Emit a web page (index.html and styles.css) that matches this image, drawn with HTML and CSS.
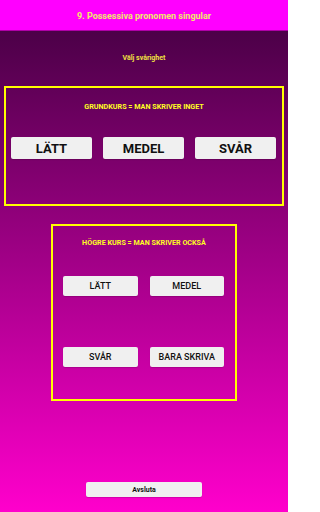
FILE: index.html
```html
<!DOCTYPE html>
<html lang="sv">
<head>
<meta charset="utf-8">
<link rel="stylesheet" href="styles.css">
</head>
<body>
<header class="topbar"><span class="title">9. Possessiva pronomen singular</span></header>
<main class="content">
  <p class="choose">Välj svårighet</p>
  <section class="box box-basic">
    <h2 class="box-title">GRUNDKURS = MAN SKRIVER INGET</h2>
    <div class="row3">
      <button class="btn btn-big">LÄTT</button>
      <button class="btn btn-big">MEDEL</button>
      <button class="btn btn-big">SVÅR</button>
    </div>
  </section>
  <section class="box box-high">
    <h2 class="box-title">HÖGRE KURS = MAN SKRIVER OCKSÅ</h2>
    <div class="grid2">
      <button class="btn btn-mid">LÄTT</button>
      <button class="btn btn-mid">MEDEL</button>
      <button class="btn btn-mid">SVÅR</button>
      <button class="btn btn-mid">BARA SKRIVA</button>
    </div>
  </section>
  <div class="spacer"></div>
  <button class="btn btn-quit">Avsluta</button>
</main>
</body>
</html>
```
FILE: styles.css
```css
* { box-sizing: border-box; }
html, body { margin: 0; padding: 0; }
body {
  width: 288px;
  height: 512px;
  display: flex;
  flex-direction: column;
  font-family: Roboto, "Liberation Sans", sans-serif;
  overflow: hidden;
}
.topbar {
  height: 31px;
  padding-top: 2px;
  background: #ff00ff;
  border-bottom: 1px solid #b000a8;
  display: flex;
  align-items: center;
  justify-content: center;
}
.title {
  color: #f2e86a;
  font-weight: 700;
  font-size: 9px;
}
.content {
  flex: 1;
  background: linear-gradient(#4c0048, #ff00cc);
  display: flex;
  flex-direction: column;
  align-items: center;
}
.choose {
  margin: 22px 0 0;
  height: 10px;
  line-height: 10px;
  color: #f0e040;
  font-weight: 700;
  font-size: 7px;
}
.box {
  border: 2px solid #ffff00;
  display: flex;
  flex-direction: column;
}
.box-basic {
  width: 280px;
  height: 120px;
  margin-top: 23px;
}
.box-high {
  width: 186px;
  height: 177px;
  margin-top: 18px;
}
.box-title {
  margin: 0;
  color: #ffff22;
  font-weight: 700;
  font-size: 7.2px;
  text-align: center;
  height: 8px;
  line-height: 8px;
}
.box-basic .box-title { margin-top: 15px; }
.box-high .box-title { margin-top: 13px; }
.btn {
  border: none;
  background: #f0f0f0;
  border-radius: 2px;
  color: #111;
  font-family: Roboto, "Liberation Sans", sans-serif;
  padding: 0;
  box-shadow: 0 1px 1px rgba(0,0,0,0.15);
}
.row3 {
  display: flex;
  gap: 11px;
  padding: 0 6px 0 5px;
  margin-top: 26px;
}
.btn-big {
  flex: 1;
  height: 22px;
  font-size: 13px;
  font-weight: 700;
}
.grid2 {
  display: grid;
  grid-template-columns: 1fr 1fr;
  column-gap: 12px;
  row-gap: 51px;
  padding: 0 11px 0 10px;
  margin-top: 29px;
}
.btn-mid {
  height: 20px;
  font-size: 9px;
  font-weight: 500;
}
.spacer { flex: 1; }
.btn-quit {
  width: 116px;
  height: 15px;
  font-size: 7px;
  font-weight: 700;
  margin-bottom: 15px;
}
```
